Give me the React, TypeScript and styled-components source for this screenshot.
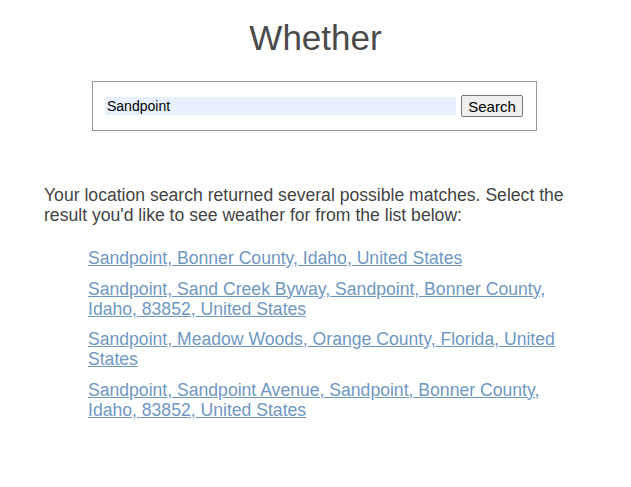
import React, { useState } from "react";
import styled, { createGlobalStyle } from "styled-components";

const GlobalStyle = createGlobalStyle`
    body {
        margin: 0;
        background: #ffffff;
        font-family: "Liberation Sans", Arial, sans-serif;
        color: #444444;
    }
`

const results = [
    "Sandpoint, Bonner County, Idaho, United States",
    "Sandpoint, Sand Creek Byway, Sandpoint, Bonner County, Idaho, 83852, United States",
    "Sandpoint, Meadow Woods, Orange County, Florida, United States",
    "Sandpoint, Sandpoint Avenue, Sandpoint, Bonner County, Idaho, 83852, United States",
]

export default function App() {
    const [query, setQuery] = useState("Sandpoint")

    return (
        <Page>
            <GlobalStyle />
            <Title>Whether</Title>
            <SearchForm onSubmit={(e) => e.preventDefault()}>
                <SearchInput value={query} onChange={(e) => setQuery(e.target.value)} />
                <SearchButton type="submit">Search</SearchButton>
            </SearchForm>

            <Intro>
                Your location search returned several possible matches. Select the result you'd like to see weather for from the list below:
            </Intro>
            <ResultList>
                {results.map((r, i) => (
                    <ResultItem key={i}>
                        <ResultLink href="#">{r}</ResultLink>
                    </ResultItem>
                ))}
            </ResultList>
        </Page>
    )
}

const Page = styled.main`
    padding: 0 44px;
`

const Title = styled.h1`
    margin: 18px 0 23px;
    font-size: 35px;
    line-height: 40px;
    font-weight: normal;
    text-align: center;
    color: #4a4a4a;
`

const SearchForm = styled.form`
    display: flex;
    align-items: center;
    gap: 5px;
    width: 445px;
    height: 50px;
    box-sizing: border-box;
    margin: 0 0 0 48px;
    padding: 0 12px;
    border: 1px solid #999999;
`

const SearchInput = styled.input`
    width: 351px;
    height: 18px;
    padding: 0 2px;
    box-sizing: border-box;
    border: none;
    outline: none;
    background: #e8f0fe;
    font-family: "Liberation Sans", Arial, sans-serif;
    font-size: 14px;
    color: #000000;
`

const SearchButton = styled.button`
    width: 62px;
    height: 22px;
    padding: 0;
    border: 1px solid #767676;
    border-radius: 2px;
    background: #efefef;
    font-family: "Liberation Sans", Arial, sans-serif;
    font-size: 15px;
    color: #000000;
`

const Intro = styled.p`
    margin: 54px 0 23px;
    font-size: 17.6px;
    line-height: 20px;
`

const ResultList = styled.ul`
    list-style: none;
    margin: 0;
    padding: 0 0 0 44px;
`

const ResultItem = styled.li`
    font-size: 17.6px;
    line-height: 20px;
    margin-bottom: 10.5px;
`

const ResultLink = styled.a`
    color: #6f98c2;
    text-decoration: underline;
`
